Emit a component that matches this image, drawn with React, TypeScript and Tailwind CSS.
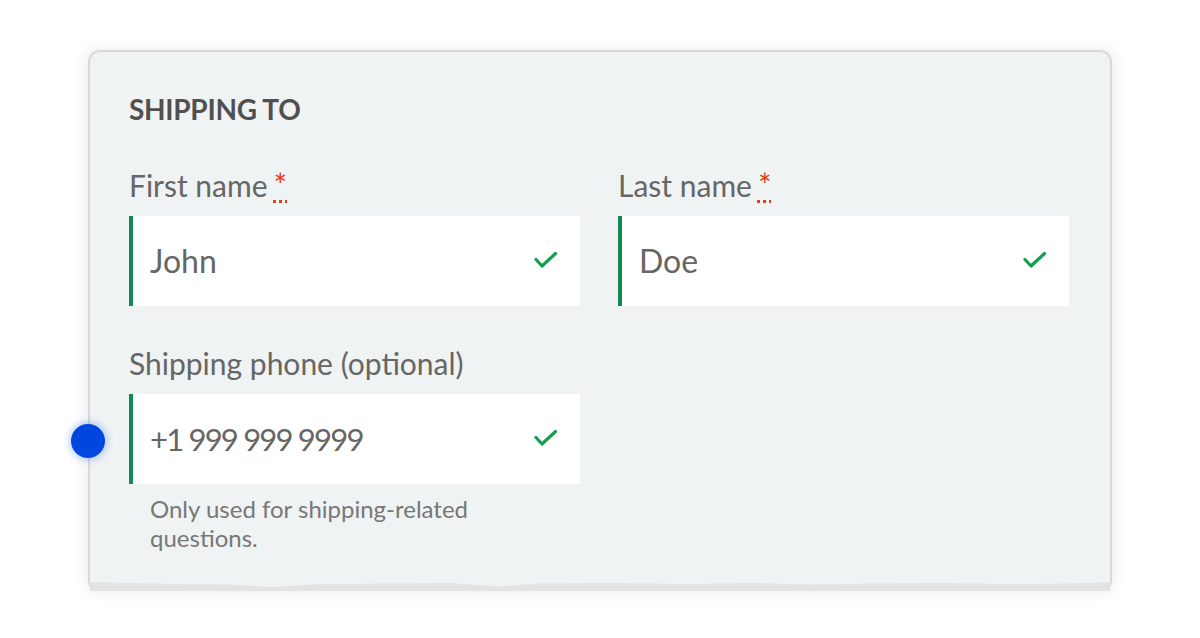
import React from 'react';

const font = { fontFamily: 'Lato, "Noto Sans", sans-serif' };

function Check() {
  return (
    <svg width="24" height="18" viewBox="0 0 24 18" className="shrink-0">
      <path d="M2 7.5 L8 14 L21.5 1.5" fill="none" stroke="#12a150" strokeWidth="3.2" strokeLinecap="round" strokeLinejoin="round" />
    </svg>
  );
}

function Required() {
  return (
    <abbr
      title="required"
      className="ml-[6px] text-[32px] text-[#e2401c]"
      style={{ textDecorationLine: 'underline', textDecorationStyle: 'dotted', textDecorationThickness: '3px', textUnderlineOffset: '3px' }}
    >
      *
    </abbr>
  );
}

function Field({ label, value, required, tight }: { label: string; value: string; required?: boolean; tight?: boolean }) {
  return (
    <div className="flex flex-col">
      <label className="text-[30px] leading-[30px] text-[#666]">
        {label}
        {required && <Required />}
      </label>
      <div className="mt-[16px] flex h-[90px] items-center border-l-4 border-[#138a53] bg-white pl-[17px] pr-[22px]">
        <span className={tight ? 'flex-1 text-[31px] leading-[32px] tracking-[-1.8px] text-[#666]' : 'flex-1 text-[32px] leading-[32px] text-[#666]'}>
          {value}
        </span>
        <Check />
      </div>
    </div>
  );
}

export default function App() {
  return (
    <div className="relative h-[638px] w-[1200px] overflow-hidden bg-white" style={font}>
      <div className="pl-[88px] pt-[50px]">
        <div className="flex w-[1024px] flex-col rounded-t-[12px] rounded-b-[10px] border-x-2 border-t-2 border-[#d9d9d9] bg-[#f0f3f4] shadow-[0_0_12px_5px_rgba(0,0,0,0.05)]">
          <div className="pb-[29px] pl-[39px] pr-[41px] pt-[43px]">
            <h2 className="text-[28px] font-bold leading-[28px] tracking-[-0.3px] text-[#505050]">SHIPPING TO</h2>
            <div className="mt-[47px] grid grid-cols-2 gap-x-[38px]">
              <Field label="First name" value="John" required />
              <Field label="Last name" value="Doe" required />
            </div>
            <div className="mt-[42px] grid grid-cols-2 gap-x-[38px]">
              <div className="flex flex-col">
                <Field label="Shipping phone (optional)" value="+1 999 999 9999" tight />
                <p className="mt-[10px] max-w-[370px] pl-[21px] text-[24px] leading-[29px] text-[#777]">
                  Only used for shipping-related questions.
                </p>
              </div>
            </div>
          </div>
          <svg width="1020" height="10" viewBox="0 0 1020 10" preserveAspectRatio="none" className="block">
            <path
              d="M0 1 L40 2 L90 3 L140 3.5 L182 6 L230 3 L300 2.5 L360 2 L408 5.5 L450 2.5 L520 2 L600 3 L660 2 L720 3.5 L780 2.5 L850 2 L920 3 L980 2.5 L1020 1 L1020 10 L0 10 Z"
              fill="#e3e3e3"
            />
          </svg>
        </div>
      </div>
      <div className="absolute left-[71px] top-[424px] h-[34px] w-[34px] rounded-full bg-[#0047e0] shadow-[0_0_6px_3px_rgba(0,71,224,0.22)]" />
    </div>
  );
}
